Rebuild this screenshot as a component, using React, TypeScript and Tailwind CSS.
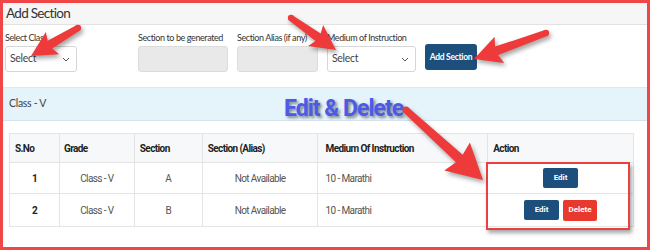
import React from 'react';

type Pt = [number, number];

// builds a fat arrow polygon going from tail to tip
function arrowPoints(tail: Pt, tip: Pt, w: number, headLen: number, headHalf: number) {
  const dx = tip[0] - tail[0];
  const dy = tip[1] - tail[1];
  const len = Math.hypot(dx, dy);
  const ux = dx / len;
  const uy = dy / len;
  const nx = -uy;
  const ny = ux;
  const bx = tip[0] - ux * headLen;
  const by = tip[1] - uy * headLen;
  const pts: Pt[] = [
    [tail[0] + nx * w * 0.35, tail[1] + ny * w * 0.35],
    [bx + nx * w / 2, by + ny * w / 2],
    [bx + nx * headHalf - ux * 3, by + ny * headHalf - uy * 3],
    tip,
    [bx - nx * headHalf - ux * 3, by - ny * headHalf - uy * 3],
    [bx - nx * w / 2, by - ny * w / 2],
    [tail[0] - nx * w * 0.35, tail[1] - ny * w * 0.35],
  ];
  return pts.map((p) => p.join(',')).join(' ');
}

const arrows: { tail: Pt; tip: Pt; w: number; hl: number; hh: number }[] = [
  { tail: [78, 28], tip: [31, 56], w: 9, hl: 22, hh: 13 },
  { tail: [291, 18], tip: [336, 50], w: 9, hl: 22, hh: 13 },
  { tail: [546, 33], tip: [474, 59], w: 9, hl: 24, hh: 14 },
  { tail: [406, 110], tip: [483, 180], w: 10, hl: 32, hh: 19 },
];

function SelectBox({ width }: { width: string }) {
  return (
    <div className={`${width} h-[26px] bg-white border border-[#d6d6d6] rounded-[3px] flex items-center justify-between pl-[4px] pr-[6px]`}>
      <span className="text-[10.5px] tracking-[-0.3px] text-[#444]">Select</span>
      <svg width="8" height="5" viewBox="0 0 8 5">
        <path d="M1 1l3 3 3-3" fill="none" stroke="#555" strokeWidth="1" />
      </svg>
    </div>
  );
}

const rows = [
  { no: 1, grade: 'Class - V', section: 'A', alias: 'Not Available', medium: '10 - Marathi', del: false },
  { no: 2, grade: 'Class - V', section: 'B', alias: 'Not Available', medium: '10 - Marathi', del: true },
];

const label = 'h-[14px] mb-[1px] text-[9px] tracking-[-0.4px] leading-[14px] text-[#333] whitespace-nowrap';

export default function App() {
  return (
    <div className="relative w-[650px] h-[250px] overflow-hidden bg-white border-[3px] border-[#f04646] font-['Lato',sans-serif]">
      <div className="h-[22px] bg-[#f6f6f6] border-b border-[#e2e2e2] pl-[3px] text-[13.5px] tracking-[-0.7px] leading-[21px] text-[#333]">
        Add Section
      </div>

      <div className="flex items-end px-[2px] pt-[6px]">
        <div className="w-[72px] mr-[61px]">
          <div className={label}>Select Class</div>
          <SelectBox width="w-[72px]" />
        </div>
        <div className="w-[90px] mr-[9px]">
          <div className={label}>Section to be generated</div>
          <div className="h-[26px] bg-[#e9e9e9] border border-[#dcdcdc] rounded-[3px]" />
        </div>
        <div className="w-[81px] mr-[9px]">
          <div className={label}>Section Alias (if any)</div>
          <div className="h-[26px] bg-[#e9e9e9] border border-[#dcdcdc] rounded-[3px]" />
        </div>
        <div className="w-[89px] mr-[9px]">
          <div className={label}>Medium of Instruction</div>
          <SelectBox width="w-[89px]" />
        </div>
        <button className="w-[52px] h-[26px] mb-[2px] bg-[#1d4f7c] rounded-[3px] text-white text-[8.5px] tracking-[-0.3px] font-bold whitespace-nowrap">
          Add Section
        </button>
      </div>

      <div className="mt-[15px] h-[34px] bg-[#e5f3fb] border-t border-[#d9ebf5] border-b border-b-[#d4e3ec] pl-[6px] flex items-center text-[10.5px] tracking-[-0.3px] text-[#444]">
        Class - V
      </div>

      <table className="mt-[12px] ml-[6px] w-[625px] border-collapse font-['Roboto',sans-serif] text-[10px] tracking-[-0.6px]">
        <thead>
          <tr className="h-[29px] bg-[#f7f8fa] text-[#222]">
            <th className="w-[50px] border border-[#e4e4e4] text-left font-bold pl-[5px]">S.No</th>
            <th className="w-[75px] border border-[#e4e4e4] text-left font-bold pl-[4px]">Grade</th>
            <th className="w-[68px] border border-[#e4e4e4] text-left font-bold pl-[5px]">Section</th>
            <th className="w-[116px] border border-[#e4e4e4] text-left font-bold pl-[5px]">Section (Alias)</th>
            <th className="w-[170px] border border-[#e4e4e4] text-left font-bold pl-[7px]">Medium Of Instruction</th>
            <th className="w-[146px] border border-[#e4e4e4] text-left font-bold pl-[5px]">Action</th>
          </tr>
        </thead>
        <tbody>
          {rows.map((r) => (
            <tr key={r.no} className={r.del ? 'h-[33px]' : 'h-[31px]'}>
              <td className="border border-[#e4e4e4] text-center font-bold text-[#222]">{r.no}</td>
              <td className="border border-[#e4e4e4] text-center text-[#555]">{r.grade}</td>
              <td className="border border-[#e4e4e4] text-center text-[#555]">{r.section}</td>
              <td className="border border-[#e4e4e4] text-center text-[#555]">{r.alias}</td>
              <td className="border border-[#e4e4e4] pl-[7px] text-[#555]">{r.medium}</td>
              <td className="border border-[#e4e4e4]">
                <div className="flex justify-center gap-[4px] tracking-normal">
                  <button className="w-[35px] h-[20px] bg-[#1d4f7c] rounded-[2px] text-white text-[8px] font-bold">Edit</button>
                  {r.del && (
                    <button className="w-[34px] h-[21px] bg-[#e8392f] rounded-[2px] text-white text-[8px] font-bold">Delete</button>
                  )}
                </div>
              </td>
            </tr>
          ))}
        </tbody>
      </table>

      {/* annotations laid over the screenshot */}
      <div className="absolute -left-[3px] -top-[3px] w-[650px] h-[250px] pointer-events-none">
        <div className="absolute left-[486px] top-[162px] w-[144px] h-[68px] border-2 border-[#e8413f] shadow-[2px_3px_4px_rgba(0,0,0,0.35)]" />
        <div className="absolute left-[284px] top-[92px] font-['Roboto',sans-serif] font-bold text-[23px] tracking-[-1px] text-[#4b5be8] [text-shadow:2px_2px_3px_rgba(0,0,0,0.45)] whitespace-nowrap">
          Edit &amp; Delete
        </div>
        <svg width="650" height="250" className="absolute left-0 top-0 drop-shadow-[2px_3px_2px_rgba(0,0,0,0.35)]">
          {arrows.map((a, i) => (
            <g key={i} fill="#ee3a3a">
              <polygon points={arrowPoints(a.tail, a.tip, a.w, a.hl, a.hh)} />
              <circle cx={a.tail[0]} cy={a.tail[1]} r={a.w * 0.35} />
            </g>
          ))}
        </svg>
      </div>
    </div>
  );
}
